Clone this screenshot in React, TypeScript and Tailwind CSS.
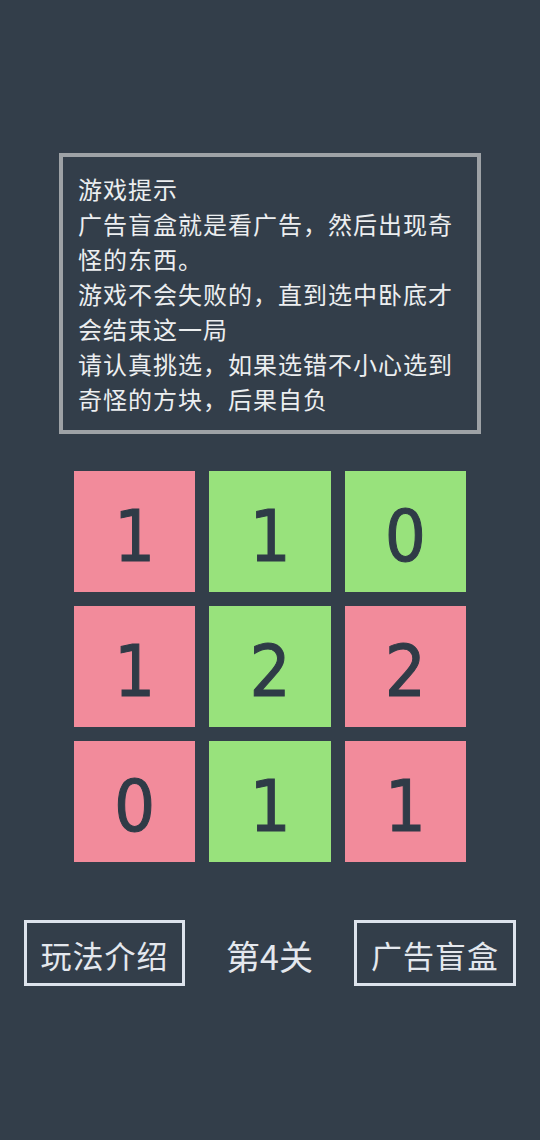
import React from 'react'

const cells = [
  { n: 1, on: false },
  { n: 1, on: true },
  { n: 0, on: true },
  { n: 1, on: false },
  { n: 2, on: true },
  { n: 2, on: false },
  { n: 0, on: false },
  { n: 1, on: true },
  { n: 1, on: false },
]

const cjk = { fontFamily: '"Noto Sans CJK SC", "Noto Sans", sans-serif' }

export default function App() {
  return (
    <div className="min-h-[1140px] w-full bg-[#333e4a] pt-[153px]" style={cjk}>
      {/* hint panel */}
      <div className="mx-auto w-[422px] border-4 border-[#9ea2a6] px-[15px] pt-[14px] pb-[14px]">
        <div className="text-[24px] leading-[35px] tracking-[1px] text-[#eceef0]">
          <p>游戏提示</p>
          <p>广告盲盒就是看广告，然后出现奇怪的东西。</p>
          <p>游戏不会失败的，直到选中卧底才会结束这一局</p>
          <p>请认真挑选，如果选错不小心选到奇怪的方块，后果自负</p>
        </div>
      </div>

      {/* board */}
      <div className="mx-auto mt-[37px] grid w-[392px] grid-cols-3 gap-[14px]">
        {cells.map((c, i) => (
          <div
            key={i}
            className={`flex h-[121px] items-center justify-center pt-[8px] text-[72px] leading-none text-[#2f3b47] ${
              c.on ? 'bg-[#98e27c]' : 'bg-[#f28b9b]'
            }`}
            style={{ fontFamily: '"DejaVu Sans Condensed", "DejaVu Sans", sans-serif', WebkitTextStroke: '1px #2f3b47' }}
          >
            {c.n}
          </div>
        ))}
      </div>

      {/* bottom bar */}
      <div className="mt-[58px] flex items-center justify-between px-[24px]">
        <button className="flex h-[66px] w-[161px] items-center justify-center border-[3px] border-[#dde3ec] pt-[4px] text-[31px] tracking-[1px] text-[#e4e8ee]">
          玩法介绍
        </button>
        <span className="pt-[4px] text-[34px] text-[#e4e8ee]">第4关</span>
        <button className="flex h-[66px] w-[162px] items-center justify-center border-[3px] border-[#dde3ec] pt-[4px] text-[31px] tracking-[1px] text-[#e4e8ee]">
          广告盲盒
        </button>
      </div>
    </div>
  )
}
